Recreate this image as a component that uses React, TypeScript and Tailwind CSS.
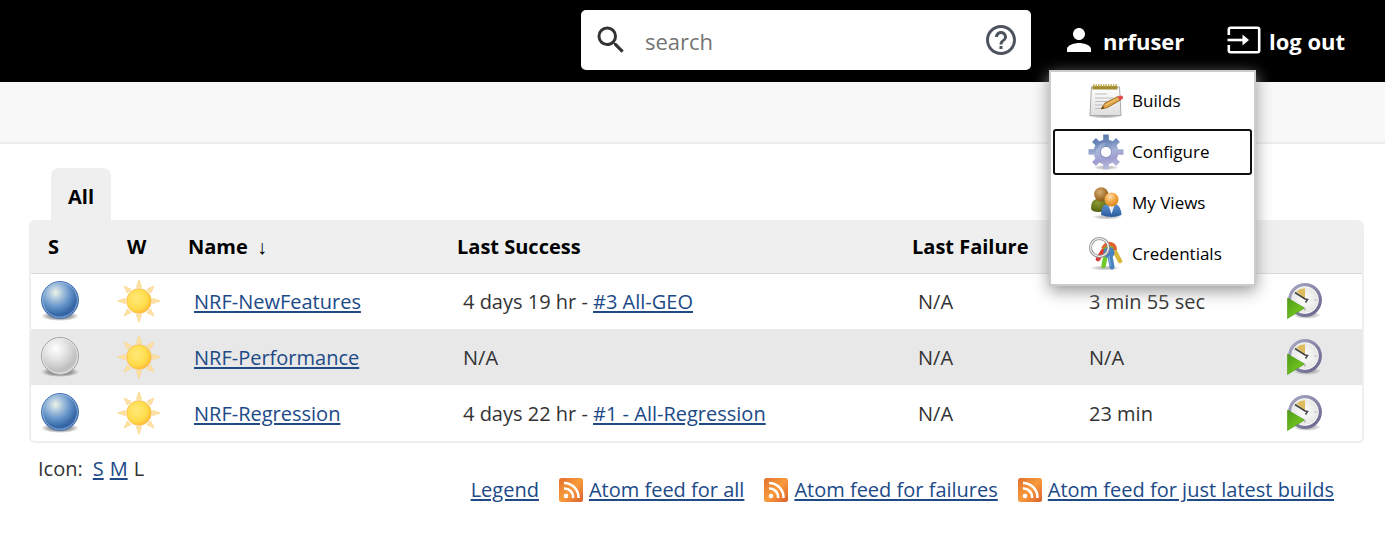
import React from "react";

interface Job {
  name: string;
  status: "blue" | "grey";
  success: string;
  successBuild?: string;
  failure: string;
  duration: string;
}

const jobs: Job[] = [
  {
    name: "NRF-NewFeatures",
    status: "blue",
    success: "4 days 19 hr - ",
    successBuild: "#3 All-GEO",
    failure: "N/A",
    duration: "3 min 55 sec",
  },
  {
    name: "NRF-Performance",
    status: "grey",
    success: "N/A",
    failure: "N/A",
    duration: "N/A",
  },
  {
    name: "NRF-Regression",
    status: "blue",
    success: "4 days 22 hr - ",
    successBuild: "#1 - All-Regression",
    failure: "N/A",
    duration: "23 min",
  },
];

const feeds = [
  "Atom feed for all",
  "Atom feed for failures",
  "Atom feed for just latest builds",
];

const link =
  "text-[#204a87] underline decoration-2 underline-offset-2 hover:text-black";

/* Shared gradients for the icons */
const IconDefs = () => (
  <svg className="absolute size-0" aria-hidden="true">
    <defs>
      <radialGradient id="ball-blue" cx="0.38" cy="0.3" r="0.72">
        <stop offset="0" stopColor="#eef3e0" />
        <stop offset="0.22" stopColor="#b4cbe0" />
        <stop offset="0.55" stopColor="#6393c9" />
        <stop offset="0.85" stopColor="#3465a4" />
        <stop offset="1" stopColor="#3f6fae" />
      </radialGradient>
      <radialGradient id="ball-grey" cx="0.38" cy="0.3" r="0.72">
        <stop offset="0" stopColor="#ffffff" />
        <stop offset="0.4" stopColor="#e4e4e4" />
        <stop offset="0.85" stopColor="#bdbdbd" />
        <stop offset="1" stopColor="#cfcfcf" />
      </radialGradient>
      <radialGradient id="ground">
        <stop offset="0" stopColor="#000" stopOpacity="0.6" />
        <stop offset="0.6" stopColor="#000" stopOpacity="0.35" />
        <stop offset="1" stopColor="#000" stopOpacity="0" />
      </radialGradient>
      <radialGradient id="sun" cx="0.4" cy="0.4" r="0.65">
        <stop offset="0" stopColor="#ffe97a" />
        <stop offset="0.65" stopColor="#ffdc4a" />
        <stop offset="1" stopColor="#fdb831" />
      </radialGradient>
      <linearGradient id="rss" x1="0" y1="0" x2="1" y2="1">
        <stop offset="0" stopColor="#e0702f" />
        <stop offset="0.5" stopColor="#f99b3c" />
        <stop offset="1" stopColor="#d9602c" />
      </linearGradient>
      <linearGradient id="gear" gradientUnits="userSpaceOnUse" x1="14" y1="0" x2="22" y2="36">
        <stop offset="0" stopColor="#5676ae" />
        <stop offset="0.25" stopColor="#6f8abb" />
        <stop offset="0.5" stopColor="#a9b4d8" />
        <stop offset="0.7" stopColor="#a09dd0" />
        <stop offset="1" stopColor="#b9c2de" />
      </linearGradient>
      <linearGradient id="paper" x1="0" y1="0" x2="0" y2="1">
        <stop offset="0" stopColor="#ffffff" />
        <stop offset="1" stopColor="#dedede" />
      </linearGradient>
      <radialGradient id="head-brown" cx="0.4" cy="0.35" r="0.65">
        <stop offset="0" stopColor="#d9ae74" />
        <stop offset="1" stopColor="#8f5a12" />
      </radialGradient>
      <radialGradient id="head-orange" cx="0.4" cy="0.3" r="0.7">
        <stop offset="0" stopColor="#ffe0b0" />
        <stop offset="0.5" stopColor="#f3ab4c" />
        <stop offset="1" stopColor="#dd8616" />
      </radialGradient>
      <radialGradient id="body-green" cx="0.4" cy="0.3" r="0.8">
        <stop offset="0" stopColor="#8c9a35" />
        <stop offset="1" stopColor="#4b5a08" />
      </radialGradient>
      <linearGradient id="body-blue" x1="0" y1="0" x2="0" y2="1">
        <stop offset="0" stopColor="#5f92d0" />
        <stop offset="1" stopColor="#2b5a9c" />
      </linearGradient>
      <linearGradient id="play" x1="0" y1="0" x2="1" y2="1">
        <stop offset="0" stopColor="#4d9a12" />
        <stop offset="0.6" stopColor="#6cc11f" />
        <stop offset="1" stopColor="#59a814" />
      </linearGradient>
      <linearGradient id="clock-ring" x1="0" y1="0" x2="1" y2="1">
        <stop offset="0" stopColor="#a9aac6" />
        <stop offset="1" stopColor="#65648a" />
      </linearGradient>
      <radialGradient id="clock-face">
        <stop offset="0" stopColor="#ffffff" />
        <stop offset="1" stopColor="#e2e2e0" />
      </radialGradient>
    </defs>
  </svg>
);

const Ball: React.FC<{ status: Job["status"] }> = ({ status }) => (
  <svg viewBox="0 0 40 42" className="block h-[42px] w-10" role="img" aria-label={status === "blue" ? "Success" : "Not built"}>
    <ellipse cx="20" cy="36" rx="19" ry="5" fill="url(#ground)" />
    {status === "blue" ? (
      <>
        <circle cx="20" cy="20" r="18.5" fill="url(#ball-blue)" stroke="#4a78b4" />
        <circle cx="20" cy="20" r="17.3" fill="none" stroke="#9dbce0" strokeOpacity="0.75" />
      </>
    ) : (
      <>
        <circle cx="20" cy="20" r="18.5" fill="url(#ball-grey)" stroke="#a6a6a6" />
        <circle cx="20" cy="20" r="17.3" fill="none" stroke="#ededed" strokeOpacity="0.8" />
      </>
    )}
  </svg>
);

const Sun = () => (
  <svg viewBox="0 0 44 44" className="block size-11" role="img" aria-label="No recent builds failed">
    {[0, 45, 90, 135, 180, 225, 270, 315].map((angle) => (
      <path
        key={angle}
        d="M22 0.8 L24.6 8.2 H19.4 Z"
        fill="#ffe3a6"
        stroke="#fcd58c"
        strokeWidth="0.8"
        transform={`rotate(${angle} 22 22)`}
      />
    ))}
    <circle cx="22" cy="22" r="12.3" fill="url(#sun)" stroke="#fcc25c" />
  </svg>
);

const Schedule = () => (
  <svg viewBox="0 0 36 38" className="block h-[38px] w-9" aria-hidden="true">
    <ellipse cx="20" cy="33" rx="14" ry="4" fill="url(#ground)" opacity="0.6" />
    <circle cx="18" cy="18" r="15.3" fill="url(#clock-face)" stroke="url(#clock-ring)" strokeWidth="3.2" />
    <circle cx="18" cy="18" r="13.3" fill="none" stroke="#fff" strokeOpacity="0.7" strokeWidth="0.8" />
    <path d="M9.5 9.5 Q13 6 18 6.5 V16.5 Z" fill="#dcbc5c" />
    <path d="M8 10.5 L18 17 L20.5 17.5 L18.5 20.5" fill="none" stroke="#444" strokeWidth="1.6" />
    <circle cx="28.5" cy="18" r="1" fill="#c4c4c4" />
    <circle cx="18" cy="27.5" r="1" fill="#b4b4b4" />
    <path d="M0.5 16 L17.5 26 L0.5 36.5 Z" fill="url(#play)" stroke="#4e9614" strokeWidth="0.6" />
  </svg>
);

const Feed = () => (
  <svg viewBox="0 0 24 24" className="size-6 shrink-0" aria-hidden="true">
    <rect width="24" height="24" rx="2.5" fill="url(#rss)" />
    <circle cx="7" cy="18" r="2.3" fill="#fff" />
    <path d="M5 10.5 A8.5 8.5 0 0 1 14 20 M5 5 A14.5 14.5 0 0 1 19.5 20" fill="none" stroke="#fff" strokeWidth="2.5" />
  </svg>
);

const Notepad = () => (
  <svg viewBox="0 0 36 36" className="size-9" aria-hidden="true">
    <ellipse cx="17" cy="33" rx="17" ry="2.5" fill="url(#ground)" opacity="0.6" />
    <path d="M3.5 4 H31.5 L33 32.5 H2 Z" fill="url(#paper)" stroke="#a9a9a9" />
    <path d="M4.5 3 H29.5 V6.5 H4.5 Z" fill="#a08c33" />
    <path d="M5 2.5 H29.5" stroke="#c2ac4c" strokeWidth="2.5" strokeDasharray="1.5 1" />
    <path d="M7 11 H19 M7 15 H25 M7 18.5 H22 M7 22 H15 M7 25.5 H13" stroke="#bdbdbd" />
    <path d="M13 26 L17 20 L30 13.5 L32.5 17 L19.5 24.5 Z" fill="#dda345" stroke="#9b661a" strokeWidth="0.9" />
    <path d="M17.5 22 L30.5 15" stroke="#f6d089" />
    <path d="M13 26 L15 23 L16.5 25.2 Z" fill="#6b4a1c" />
    <path d="M29.5 13.8 L33 12.5 Q35.5 13 35 15.5 L32 17.5 Z" fill="#e24b4b" />
  </svg>
);

const Gear = () => (
  <svg viewBox="0 0 36 36" className="size-9" aria-hidden="true">
    <ellipse cx="18" cy="33.5" rx="13" ry="2.5" fill="url(#ground)" opacity="0.5" />
    <g stroke="url(#gear)" strokeWidth="5.6">
      <path d="M18 0.5 V12 M18 24 V35.5 M0.5 18 H12 M24 18 H35.5" />
      <path d="M6 6 L13 13 M30 6 L23 13 M6 30 L13 23 M30 30 L23 23" />
    </g>
    <path
      d="M18 5.5 A12.5 12.5 0 1 0 18 30.5 A12.5 12.5 0 1 0 18 5.5 Z M18 13 A5 5 0 1 1 18 23 A5 5 0 1 1 18 13 Z"
      fill="url(#gear)"
      fillRule="evenodd"
    />
    <circle cx="18" cy="18" r="5" fill="#fff" />
    <circle cx="18" cy="18" r="5.6" fill="none" stroke="#7384b8" strokeOpacity="0.6" />
    <path d="M8 19 Q8 9 18 8.5 Q15 16 8 19 Z" fill="#fff" opacity="0.2" />
  </svg>
);

const People = () => (
  <svg viewBox="0 0 36 36" className="size-9" aria-hidden="true">
    <ellipse cx="19" cy="32" rx="15" ry="2.5" fill="url(#ground)" opacity="0.5" />
    <path d="M3 23 Q3 14 10 14 H17 Q21 15 20 26 Q3 29 3 23 Z" fill="url(#body-green)" />
    <circle cx="13.2" cy="9.2" r="7" fill="url(#head-brown)" />
    <path d="M13 30 Q13 19 20 19 H27 Q33 20 33.5 30 Q24 34 13 30 Z" fill="url(#body-blue)" />
    <path d="M20 19 H27 L23.5 29 Z" fill="#e8eff8" />
    <circle cx="23.5" cy="14.5" r="7" fill="url(#head-orange)" />
  </svg>
);

const Keys = () => (
  <svg viewBox="0 0 36 36" className="size-9" fill="none" aria-hidden="true">
    <ellipse cx="17" cy="32" rx="15" ry="2.5" fill="url(#ground)" opacity="0.5" />
    <path d="M25 12 L32 25" stroke="#d8b93a" strokeWidth="4.5" strokeLinecap="round" />
    <path d="M15 13 Q18 7 22.5 8 Q27 9 27 14" stroke="#e0602e" strokeWidth="4" />
    <path d="M15 15 L10 23" stroke="#dc3a34" strokeWidth="4.5" strokeLinecap="round" />
    <path d="M16 14 Q20 9 25 13" stroke="#74b72a" strokeWidth="3" />
    <path d="M18 18 L15.5 30" stroke="#72c92c" strokeWidth="4.5" strokeLinecap="round" />
    <circle cx="21" cy="16.5" r="5.5" fill="#4a83c2" />
    <path d="M21.5 17 L24 31" stroke="#4a83c2" strokeWidth="5" strokeLinecap="round" />
    <path d="M21 20 L22.5 30" stroke="#83aede" strokeWidth="1.2" />
    <circle cx="11.5" cy="11.5" r="9" stroke="#8c8c8c" strokeWidth="3" />
    <circle cx="11.5" cy="11.5" r="9" stroke="#e9e9e9" strokeWidth="1.4" />
  </svg>
);

const menu = [
  { label: "Builds", icon: <Notepad /> },
  { label: "Configure", icon: <Gear />, focused: true },
  { label: "My Views", icon: <People /> },
  { label: "Credentials", icon: <Keys /> },
];

const UserMenu = () => (
  <div className="absolute top-full left-0 z-10 flex w-[207px] flex-col gap-[5px] border-2 border-[#ccc] bg-white px-0.5 pt-1.5 pb-[7px] text-[17px] font-normal text-black shadow-[0_5px_15px_#999]">
    {menu.map((item) => (
      <a
        key={item.label}
        href="#"
        className={
          item.focused
            ? "flex h-[46px] items-center gap-2 rounded-[3px] border-2 border-[#101010] pl-[33px]"
            : "flex h-[46px] items-center gap-2 border-2 border-transparent pl-[33px]"
        }
      >
        {item.icon}
        {item.label}
      </a>
    ))}
  </div>
);

const Header = () => (
  <header className="flex h-[82px] items-start justify-end bg-black py-[10px] pr-[29px] text-[22px] font-bold text-white">
    <form role="search" className="mr-[18px] flex h-[60px] w-[450px] items-center rounded-[5px] bg-white pr-3 pl-3">
      <svg viewBox="0 0 24 24" className="size-9 shrink-0" fill="#333" aria-hidden="true">
        <path d="M15.5 14h-.79l-.28-.27A6.471 6.471 0 0 0 16 9.5 6.5 6.5 0 1 0 9.5 16c1.61 0 3.09-.59 4.23-1.57l.27.28v.79l5 4.99L20.49 19l-4.99-5zm-6 0C7.01 14 5 11.99 5 9.5S7.01 5 9.5 5 14 7.01 14 9.5 11.99 14 9.5 14z" />
      </svg>
      <input
        type="text"
        aria-label="search"
        placeholder="search"
        className="ml-4 min-w-0 grow pt-0.5 font-normal text-black outline-none placeholder:text-[#757575]"
      />
      <a href="#" aria-label="Search help">
        <svg viewBox="0 0 24 24" className="size-9" fill="#4d545d" aria-hidden="true">
          <path d="M11 18h2v-2h-2v2zm1-16C6.48 2 2 6.48 2 12s4.48 10 10 10 10-4.48 10-10S17.52 2 12 2zm0 18c-4.41 0-8-3.59-8-8s3.59-8 8-8 8 3.59 8 8-3.59 8-8 8zm0-14c-2.21 0-4 1.79-4 4h2c0-1.1.9-2 2-2s2 .9 2 2c0 2-3 1.75-3 5h2c0-2.25 3-2.5 3-5 0-2.21-1.79-4-4-4z" />
        </svg>
      </a>
    </form>

    <div className="relative flex h-[60px] w-[178px] items-center pl-3">
      <a href="#" className="flex items-center gap-[6px]">
        <svg viewBox="0 0 24 24" className="size-9" fill="#fff" aria-hidden="true">
          <path d="M12 12c2.21 0 4-1.79 4-4s-1.79-4-4-4-4 1.79-4 4 1.79 4 4 4zm0 2c-2.67 0-8 1.34-8 4v2h16v-2c0-2.66-5.33-4-8-4z" />
        </svg>
        <span className="pt-0.5">nrfuser</span>
      </a>
      <UserMenu />
    </div>

    <a href="#" className="flex h-[60px] w-[129px] items-center gap-2">
      <svg viewBox="0 0 34 28" className="h-7 w-[34px]" fill="none" stroke="#fff" strokeWidth="2.6" aria-hidden="true">
        <path d="M1.8 9 V3.5 Q1.8 1.8 3.5 1.8 H30.5 Q32.2 1.8 32.2 3.5 V24.5 Q32.2 26.2 30.5 26.2 H3.5 Q1.8 26.2 1.8 24.5 V19" />
        <path d="M0.5 14 H17" />
        <path d="M15.5 8.5 L22 14 L15.5 19.5 Z" fill="#fff" stroke="none" />
      </svg>
      <span className="pt-0.5">log out</span>
    </a>
  </header>
);

const JobTable = () => (
  <div className="overflow-hidden rounded-md border-2 border-t-0 border-[#efefef]">
    <table className="w-full table-fixed border-collapse text-left">
      <colgroup>
        <col className="w-[79px]" />
        <col className="w-[72px]" />
        <col className="w-[269px]" />
        <col />
        <col className="w-[171px]" />
        <col className="w-[193px]" />
        <col className="w-[92px]" />
      </colgroup>
      <thead>
        <tr className="h-[53px] border-b border-[#d9d9d9] bg-[#efefef] text-black">
          <th className="pt-0.5 pl-[17px]">S</th>
          <th className="pt-0.5 pl-[17px]">W</th>
          <th className="pt-0.5 pl-1.5">
            Name <span className="ml-1 font-normal">↓</span>
          </th>
          <th className="pt-0.5 pl-1.5">Last Success</th>
          <th className="pt-0.5 pl-1.5">Last Failure</th>
          <th aria-label="Last Duration" />
          <td />
        </tr>
      </thead>
      <tbody>
        {jobs.map((job) => (
          <tr key={job.name} className="h-14 even:bg-[#e8e8e8]">
            <td className="pl-[9px]">
              <Ball status={job.status} />
            </td>
            <td className="pl-[7px]">
              <Sun />
            </td>
            <td className="pt-0.5 pl-3">
              <a href="#" className={link}>
                {job.name}
              </a>
            </td>
            <td className="pt-0.5 pl-3">
              {job.success}
              {job.successBuild && (
                <a href="#" className={link}>
                  {job.successBuild}
                </a>
              )}
            </td>
            <td className="pt-0.5 pl-3">{job.failure}</td>
            <td className="pt-0.5 pl-3">{job.duration}</td>
            <td className="pl-[17px]">
              <button type="button" aria-label={`Schedule a build for ${job.name}`} className="block">
                <Schedule />
              </button>
            </td>
          </tr>
        ))}
      </tbody>
    </table>
  </div>
);

const App = () => {
  return (
    <div className="bg-white font-['Open_Sans',sans-serif] text-[20px] leading-7 text-[#333]">
      <IconDefs />
      <Header />
      <div className="h-[62px] border-b-2 border-[#ececec] bg-[#f8f8f8]" />

      <main className="pt-6 pr-[21px] pb-10 pl-[29px]">
        <a
          href="#"
          className="ml-[22px] flex h-[52px] w-[60px] items-center justify-center rounded-t-lg bg-[#efefef] pt-1.5 font-bold text-black"
        >
          All
        </a>
        <JobTable />

        {/* Icon size and feeds */}
        <div className="flex items-start justify-between pt-3 pr-[30px] pl-[9px]">
          <div className="flex gap-1.5">
            <span className="mr-1">Icon:</span>
            <a href="#" className={link}>
              S
            </a>
            <a href="#" className={link}>
              M
            </a>
            <span>L</span>
          </div>
          <div className="flex gap-5 pt-[21px]">
            <a href="#" className={link}>
              Legend
            </a>
            {feeds.map((feed) => (
              <span key={feed} className="flex items-center gap-[6px]">
                <Feed />
                <a href="#" className={link}>
                  {feed}
                </a>
              </span>
            ))}
          </div>
        </div>
      </main>
    </div>
  );
};

export default App;
